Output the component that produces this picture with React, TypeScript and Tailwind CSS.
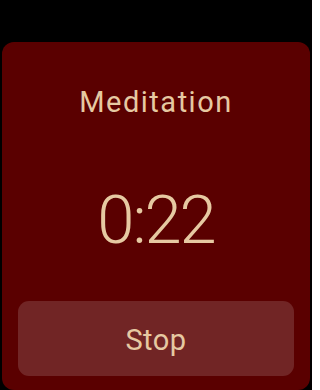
export default function App() {
  const title = "Meditation";
  const elapsed = "0:22";

  return (
    <div className="h-[390px] w-[312px] overflow-hidden bg-black px-[2px] pt-[42px] font-['Roboto',sans-serif]">
      <div className="flex h-[348px] flex-col items-center rounded-[12px] bg-[#5a0000] px-[16px] pb-[14px]">
        <div className="mt-[43px] text-[29px] leading-[34px] tracking-[1.5px] text-[#e6c9a2]">
          {title}
        </div>
        <div className="mt-[62px] text-[67px] font-light leading-[78px] tracking-[-2px] text-[#e6c9a2]">
          {elapsed}
        </div>
        <button className="mt-auto flex h-[75px] w-full items-center justify-center rounded-[11px] bg-[#712525] pt-[3px] text-[29px] leading-[34px] tracking-[0.5px] text-[#e6c9a2]">
          Stop
        </button>
      </div>
    </div>
  );
}
